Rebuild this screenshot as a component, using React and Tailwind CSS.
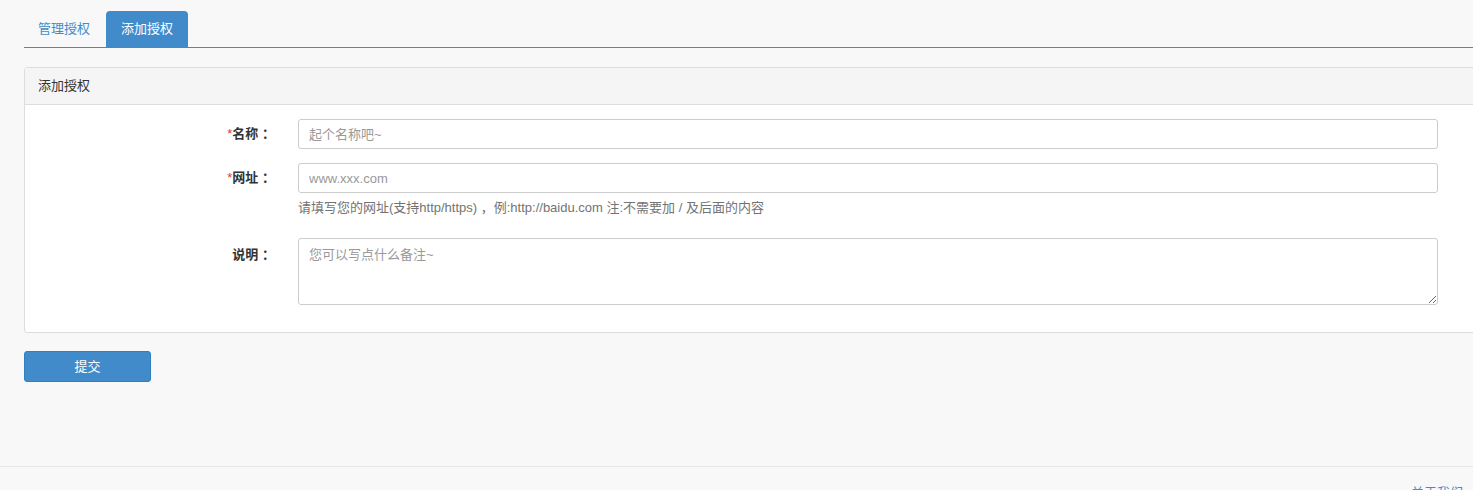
import React from "react";

const font = { fontFamily: '"Liberation Sans", "Noto Sans CJK SC", sans-serif' };

function Field({ label, required, children, top }) {
  return (
    <div className="flex">
      <label
        className={`w-[273px] shrink-0 pr-[23px] text-right text-[13px] font-bold text-[#333] ${
          top ? "pt-[7px]" : "leading-[30px]"
        }`}
      >
        {required && <span className="text-[#e4393c] font-normal">*</span>}
        {label} ：
      </label>
      <div className="w-[1140px]">{children}</div>
    </div>
  );
}

export default function App() {
  return (
    <div className="w-full h-[490px] overflow-hidden bg-[#f8f8f8] text-[13px] text-[#333]" style={font}>
      <div className="w-[1520px] pl-6 pt-[11px]">
        {/* tabs */}
        <div className="flex h-[36px]">
          <button className="px-[14px] h-[36px] text-[13px] text-[#428bca] rounded-t">管理授权</button>
          <button className="ml-[2px] px-[15px] h-[36px] text-[13px] text-white bg-[#428bca] rounded-t">
            添加授权
          </button>
        </div>
        <div className="h-px bg-[#428bca]" />

        {/* panel */}
        <div className="mt-[19px] border border-[#ddd] rounded-[3px] bg-white">
          <div className="h-[37px] px-[13px] flex items-center bg-[#f5f5f5] border-b border-[#ddd]">添加授权</div>
          <div className="pt-[14px] pb-[27px] flex flex-col">
            <Field label="名称" required>
              <input
                placeholder="起个名称吧~"
                className="w-full h-[30px] px-[10px] border border-[#ccc] rounded-[3px] text-[13px] placeholder-[#999] outline-none"
              />
            </Field>
            <div className="mt-[14px]">
              <Field label="网址" required>
                <input
                  placeholder="www.xxx.com"
                  className="w-full h-[30px] px-[10px] border border-[#ccc] rounded-[3px] text-[13px] placeholder-[#999] outline-none"
                />
                <p className="mt-[7px] text-[13px] text-[#737373] leading-[16px]">
                  请填写您的网址(支持http/https) ，例:http://baidu.com 注:不需要加 / 及后面的内容
                </p>
              </Field>
            </div>
            <div className="mt-[22px]">
              <Field label="说明" top>
                <textarea
                  placeholder="您可以写点什么备注~"
                  className="block w-full h-[67px] px-[10px] py-[6px] border border-[#ccc] rounded-[3px] text-[13px] placeholder-[#999] outline-none"
                />
              </Field>
            </div>
          </div>
        </div>

        <button className="mt-[18px] w-[127px] h-[31px] bg-[#428bca] border border-[#357ebd] rounded-[3px] text-white text-[13px]">
          提交
        </button>
      </div>

      {/* footer */}
      <div className="mt-[84px] border-t border-[#e7e7e7] h-[30px] flex justify-end pr-[10px] pt-[16px]">
        <a className="text-[13px] text-[#428bca]">关于我们</a>
      </div>
    </div>
  );
}
